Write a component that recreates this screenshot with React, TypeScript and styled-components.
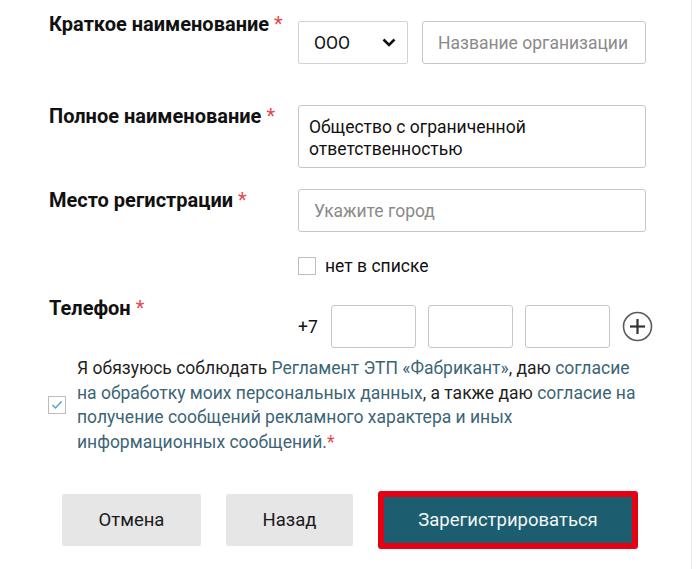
import styled, { createGlobalStyle } from "styled-components";

const GlobalStyle = createGlobalStyle`
  html, body {
    margin: 0;
    padding: 0;
    background: #fff;
  }
  body {
    font-family: Roboto, "Liberation Sans", sans-serif;
    color: #111;
  }
`;

const Page = styled.div`
  width: 692px;
  height: 569px;
  border-right: 1px solid #ececec;
  box-sizing: border-box;
  padding: 21px 0 0 49px;
`;

const Row = styled.div<{ $mt?: number }>`
  display: grid;
  grid-template-columns: 249px 348px;
  margin-top: ${(p) => p.$mt || 0}px;
`;

const Label = styled.div<{ $up?: boolean }>`
  font-size: 20px;
  font-weight: 700;
  line-height: 24px;
  color: #111;
  margin-top: ${(p) => (p.$up ? "-9px" : "-1px")};
`;

const Star = styled.span`
  color: #e5484d;
  font-weight: 400;
  margin-left: 5px;
`;

const Inline = styled.div`
  display: flex;
  align-items: center;
  gap: 14px;
`;

const Select = styled.div`
  width: 110px;
  height: 43px;
  box-sizing: border-box;
  border: 1px solid #d2d2d2;
  border-radius: 2px;
  display: flex;
  align-items: center;
  justify-content: space-between;
  padding: 0 11px 0 15px;
  font-size: 17.5px;
  color: #111;
`;

const Input = styled.input<{ $w?: number }>`
  width: ${(p) => (p.$w ? `${p.$w}px` : "100%")};
  height: 43px;
  box-sizing: border-box;
  flex-shrink: 0;
  border: 1px solid #c6c6c6;
  border-radius: 3px;
  padding: 0 15px;
  font-family: Roboto, "Liberation Sans", sans-serif;
  font-size: 17.5px;
  color: #222;
  outline: none;
  &::placeholder {
    color: #8a8a8a;
  }
`;

const TextArea = styled.textarea`
  width: 100%;
  height: 63px;
  box-sizing: border-box;
  border: 1px solid #c6c6c6;
  border-radius: 3px;
  padding: 10px 10px;
  font-family: Roboto, "Liberation Sans", sans-serif;
  font-size: 17.5px;
  line-height: 22px;
  color: #111;
  resize: none;
  outline: none;
  overflow: hidden;
`;

const CheckRow = styled.label`
  display: flex;
  align-items: center;
  gap: 9px;
  font-size: 17.5px;
  color: #111;
`;

const Box = styled.span`
  width: 18px;
  height: 18px;
  box-sizing: border-box;
  border: 1px solid #bdbdbd;
  display: inline-flex;
  align-items: center;
  justify-content: center;
  flex-shrink: 0;
`;

const Prefix = styled.span`
  font-size: 17.5px;
  color: #111;
  margin-right: 1px;
`;

const PhoneGroup = styled.div`
  display: flex;
  align-items: center;
  gap: 12px;
  width: 360px;
`;

const PlusIcon = styled.svg`
  flex-shrink: 0;
`;

const Consent = styled.div`
  display: flex;
  align-items: center;
  gap: 11px;
  margin: 8px 0 0 -1px;
`;

const ConsentText = styled.p`
  margin: 0;
  width: 580px;
  font-size: 17.5px;
  line-height: 24.5px;
  color: #1f1f1f;
`;

const Link = styled.a`
  color: #3b6576;
  text-decoration: none;
`;

const Buttons = styled.div`
  display: flex;
  align-items: center;
  gap: 25px;
  margin: 37px 0 0 13px;
`;

const GrayButton = styled.button<{ $w: number }>`
  width: ${(p) => p.$w}px;
  height: 52px;
  border: none;
  border-radius: 2px;
  background: #e6e6e6;
  font-family: Roboto, "Liberation Sans", sans-serif;
  font-size: 18.5px;
  color: #1a1a1a;
`;

const MainButton = styled.button`
  width: 260px;
  height: 58px;
  border: 6px solid #e60012;
  border-radius: 3px;
  background: #1c5e70;
  font-family: Roboto, "Liberation Sans", sans-serif;
  font-size: 18.5px;
  color: #f2f6f7;
`;

export default function App() {
  return (
    <>
      <GlobalStyle />
      <Page>
        <Row>
          <Label $up>
            Краткое наименование<Star>*</Star>
          </Label>
          <Inline>
            <Select>
              ООО
              <svg width="14" height="9" viewBox="0 0 14 9">
                <polyline
                  points="1.5,1.5 7,7 12.5,1.5"
                  fill="none"
                  stroke="#111"
                  strokeWidth="2.6"
                />
              </svg>
            </Select>
            <Input $w={224} placeholder="Название организации" />
          </Inline>
        </Row>

        <Row $mt={41}>
          <Label>
            Полное наименование<Star>*</Star>
          </Label>
          <TextArea readOnly defaultValue="Общество с ограниченной ответственностью" />
        </Row>

        <Row $mt={21}>
          <Label>
            Место регистрации<Star>*</Star>
          </Label>
          <Input placeholder="Укажите город" />
        </Row>

        <Row $mt={24}>
          <div />
          <CheckRow>
            <Box />
            нет в списке
          </CheckRow>
        </Row>

        <Row $mt={29}>
          <Label $up>
            Телефон<Star>*</Star>
          </Label>
          <PhoneGroup>
            <Prefix>+7</Prefix>
            <Input $w={85} />
            <Input $w={85} />
            <Input $w={85} />
            <PlusIcon width="31" height="31" viewBox="0 0 31 31">
              <circle cx="15.5" cy="15.5" r="14" fill="none" stroke="#5a5a5a" strokeWidth="1.6" />
              <line x1="8" y1="15.5" x2="23" y2="15.5" stroke="#333" strokeWidth="2.2" />
              <line x1="15.5" y1="8" x2="15.5" y2="23" stroke="#333" strokeWidth="2.2" />
            </PlusIcon>
          </PhoneGroup>
        </Row>

        <Consent>
          <Box>
            <svg width="12" height="10" viewBox="0 0 12 10">
              <polyline
                points="1.5,5 4.5,8 10.5,1.5"
                fill="none"
                stroke="#5b9bc4"
                strokeWidth="1.4"
              />
            </svg>
          </Box>
          <ConsentText>
            Я обязуюсь соблюдать <Link href="#">Регламент ЭТП «Фабрикант»</Link>, даю{" "}
            <Link href="#">
              согласие
              <br />
              на обработку моих персональных данных
            </Link>
            , а также даю{" "}
            <Link href="#">
              согласие на
              <br />
              получение сообщений рекламного характера и иных
              <br />
              информационных сообщений.
            </Link>
            <Star as="span" style={{ marginLeft: 0 }}>
              *
            </Star>
          </ConsentText>
        </Consent>

        <Buttons>
          <GrayButton $w={139}>Отмена</GrayButton>
          <GrayButton $w={127}>Назад</GrayButton>
          <MainButton>Зарегистрироваться</MainButton>
        </Buttons>
      </Page>
    </>
  );
}
